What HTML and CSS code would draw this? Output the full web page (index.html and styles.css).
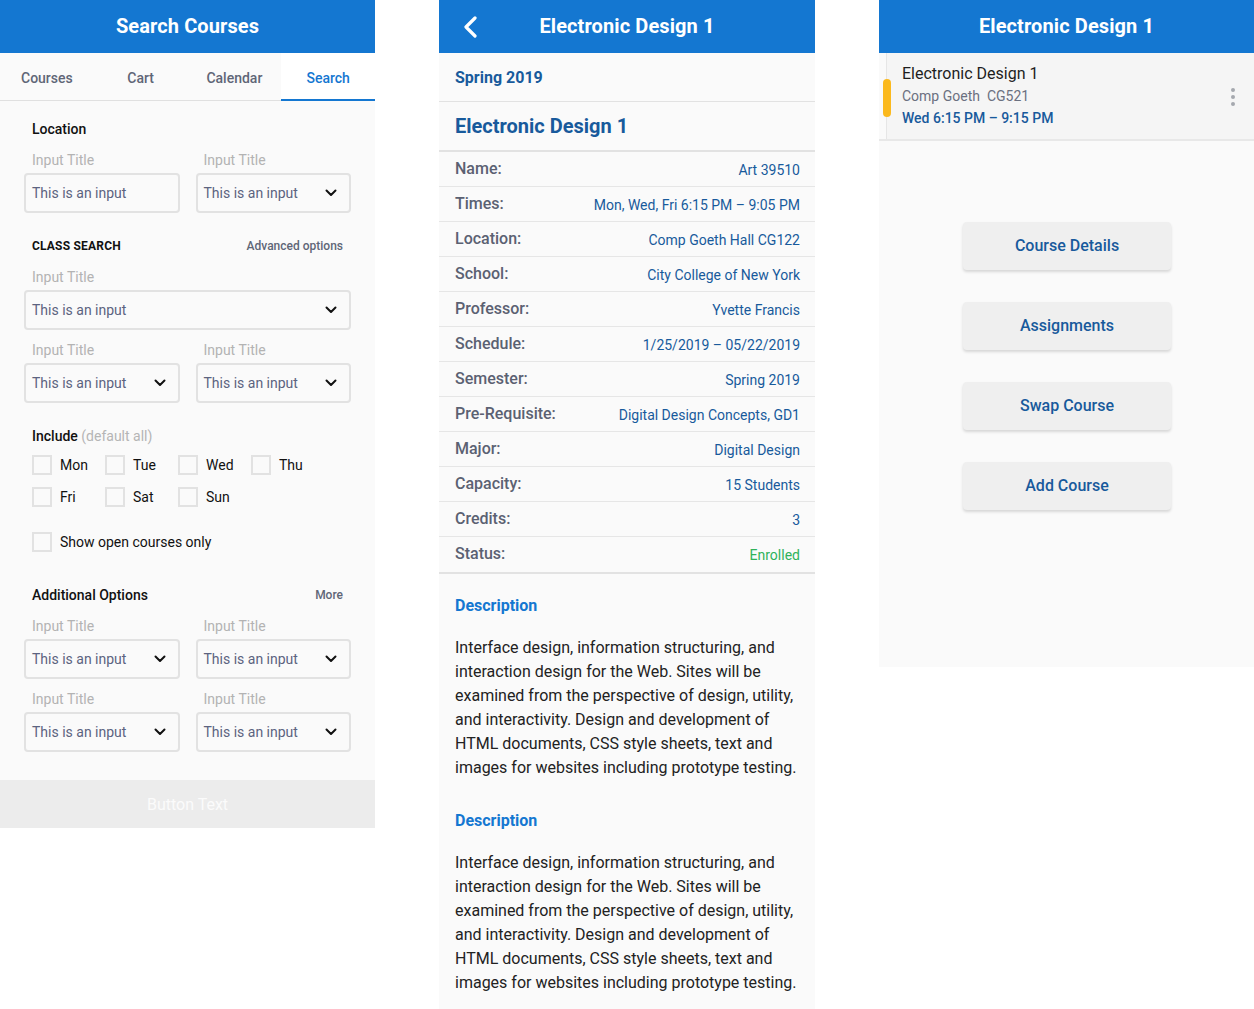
FILE: index.html
```html
<!DOCTYPE html>
<html>
<head>
<meta charset="utf-8">
<link rel="stylesheet" href="styles.css">
</head>
<body>
<div class="screens">
  <!-- Left: Search Courses -->
  <section class="panel panel-search">
    <header class="appbar"><h1>Search Courses</h1></header>
    <nav class="tabs">
      <div class="tab">Courses</div>
      <div class="tab">Cart</div>
      <div class="tab">Calendar</div>
      <div class="tab active">Search</div>
    </nav>
    <div class="form">
      <div class="sec-title first"><span class="t-med">Location</span></div>
      <div class="row2">
        <div class="field">
          <div class="flabel">Input Title</div>
          <div class="input"><span>This is an input</span></div>
        </div>
        <div class="field">
          <div class="flabel">Input Title</div>
          <div class="input"><span>This is an input</span><svg class="chev" viewBox="0 0 12 8"><path d="M1.5 1.5 L6 6 L10.5 1.5"/></svg></div>
        </div>
      </div>

      <div class="sec-title"><span class="t-caps">CLASS SEARCH</span><span class="t-link">Advanced options</span></div>
      <div class="field">
        <div class="flabel">Input Title</div>
        <div class="input"><span>This is an input</span><svg class="chev" viewBox="0 0 12 8"><path d="M1.5 1.5 L6 6 L10.5 1.5"/></svg></div>
      </div>
      <div class="row2 gap-top">
        <div class="field">
          <div class="flabel">Input Title</div>
          <div class="input"><span>This is an input</span><svg class="chev" viewBox="0 0 12 8"><path d="M1.5 1.5 L6 6 L10.5 1.5"/></svg></div>
        </div>
        <div class="field">
          <div class="flabel">Input Title</div>
          <div class="input"><span>This is an input</span><svg class="chev" viewBox="0 0 12 8"><path d="M1.5 1.5 L6 6 L10.5 1.5"/></svg></div>
        </div>
      </div>

      <div class="sec-title"><span class="t-med">Include <span class="muted">(default all)</span></span></div>
      <div class="days">
        <label class="check"><span class="box"></span>Mon</label>
        <label class="check"><span class="box"></span>Tue</label>
        <label class="check"><span class="box"></span>Wed</label>
        <label class="check"><span class="box"></span>Thu</label>
        <label class="check"><span class="box"></span>Fri</label>
        <label class="check"><span class="box"></span>Sat</label>
        <label class="check"><span class="box"></span>Sun</label>
      </div>
      <div class="open-only">
        <label class="check wide"><span class="box"></span>Show open courses only</label>
      </div>

      <div class="sec-title add"><span class="t-med">Additional Options</span><span class="t-link">More</span></div>
      <div class="row2">
        <div class="field">
          <div class="flabel">Input Title</div>
          <div class="input"><span>This is an input</span><svg class="chev" viewBox="0 0 12 8"><path d="M1.5 1.5 L6 6 L10.5 1.5"/></svg></div>
        </div>
        <div class="field">
          <div class="flabel">Input Title</div>
          <div class="input"><span>This is an input</span><svg class="chev" viewBox="0 0 12 8"><path d="M1.5 1.5 L6 6 L10.5 1.5"/></svg></div>
        </div>
      </div>
      <div class="row2 gap-top">
        <div class="field">
          <div class="flabel">Input Title</div>
          <div class="input"><span>This is an input</span><svg class="chev" viewBox="0 0 12 8"><path d="M1.5 1.5 L6 6 L10.5 1.5"/></svg></div>
        </div>
        <div class="field">
          <div class="flabel">Input Title</div>
          <div class="input"><span>This is an input</span><svg class="chev" viewBox="0 0 12 8"><path d="M1.5 1.5 L6 6 L10.5 1.5"/></svg></div>
        </div>
      </div>
    </div>
    <div class="bottom-btn">Button Text</div>
  </section>

  <!-- Middle: Course details -->
  <section class="panel panel-detail">
    <header class="appbar">
      <svg class="back" viewBox="0 0 16 22"><path d="M13 2 L4 11 L13 20"/></svg>
      <h1>Electronic Design 1</h1>
    </header>
    <div class="term">Spring 2019</div>
    <div class="course-title">Electronic Design 1</div>
    <div class="info">
      <div class="irow"><span class="ilabel">Name:</span><span class="ival">Art 39510</span></div>
      <div class="irow"><span class="ilabel">Times:</span><span class="ival">Mon, Wed, Fri 6:15 PM – 9:05 PM</span></div>
      <div class="irow"><span class="ilabel">Location:</span><span class="ival">Comp Goeth Hall CG122</span></div>
      <div class="irow"><span class="ilabel">School:</span><span class="ival">City College of New York</span></div>
      <div class="irow"><span class="ilabel">Professor:</span><span class="ival">Yvette Francis</span></div>
      <div class="irow"><span class="ilabel">Schedule:</span><span class="ival">1/25/2019 – 05/22/2019</span></div>
      <div class="irow"><span class="ilabel">Semester:</span><span class="ival">Spring 2019</span></div>
      <div class="irow"><span class="ilabel">Pre-Requisite:</span><span class="ival">Digital Design Concepts, GD1</span></div>
      <div class="irow"><span class="ilabel">Major:</span><span class="ival">Digital Design</span></div>
      <div class="irow"><span class="ilabel">Capacity:</span><span class="ival">15 Students</span></div>
      <div class="irow"><span class="ilabel">Credits:</span><span class="ival">3</span></div>
      <div class="irow last"><span class="ilabel">Status:</span><span class="ival green">Enrolled</span></div>
    </div>
    <div class="desc">
      <h2>Description</h2>
      <p>Interface design, information structuring, and<br>interaction design for the Web. Sites will be<br>examined from the perspective of design, utility,<br>and interactivity. Design and development of<br>HTML documents, CSS style sheets, text and<br>images for websites including prototype testing.</p>
      <h2 class="second">Description</h2>
      <p>Interface design, information structuring, and<br>interaction design for the Web. Sites will be<br>examined from the perspective of design, utility,<br>and interactivity. Design and development of<br>HTML documents, CSS style sheets, text and<br>images for websites including prototype testing.</p>
    </div>
  </section>

  <!-- Right: actions -->
  <section class="panel panel-actions">
    <header class="appbar"><h1>Electronic Design 1</h1></header>
    <div class="card">
      <span class="pill"></span>
      <div class="card-body">
        <div class="c-title">Electronic Design 1</div>
        <div class="c-sub">Comp Goeth&nbsp; CG521</div>
        <div class="c-time">Wed 6:15 PM – 9:15 PM</div>
      </div>
      <svg class="kebab" viewBox="0 0 6 20"><circle cx="3" cy="3" r="2"/><circle cx="3" cy="10" r="2"/><circle cx="3" cy="17" r="2"/></svg>
    </div>
    <div class="actions">
      <div class="abtn">Course Details</div>
      <div class="abtn">Assignments</div>
      <div class="abtn">Swap Course</div>
      <div class="abtn">Add Course</div>
    </div>
  </section>
</div>
</body>
</html>
```

FILE: styles.css
```css
* { box-sizing: border-box; }
html, body { margin: 0; padding: 0; }
body {
  background: #ffffff;
  font-family: Roboto, "Noto Sans", "Liberation Sans", sans-serif;
  color: #222;
}
.screens {
  display: flex;
  align-items: flex-start;
  gap: 64px;
}
.panel {
  background: #fafafa;
  display: flex;
  flex-direction: column;
}
.panel-search { width: 375px; }
.panel-detail { width: 376px; min-height: 1009px; }
.panel-actions { width: 375px; min-height: 667px; }

.appbar {
  height: 53px;
  background: #1477d1;
  display: flex;
  align-items: center;
  justify-content: center;
  position: relative;
  padding-bottom: 1px;
}
.appbar h1 {
  margin: 0;
  color: #fff;
  font-size: 20px;
  font-weight: 700;
  letter-spacing: 0.1px;
}

/* Tabs */
.tabs {
  display: flex;
  height: 48px;
  border-bottom: 1px solid #e0e0e0;
}
.tab {
  flex: 1;
  display: flex;
  align-items: center;
  justify-content: center;
  padding-top: 2px;
  font-size: 14px;
  font-weight: 500;
  color: #5f6677;
}
.tab.active {
  color: #1477d1;
  border-bottom: 2px solid #1477d1;
  margin-bottom: -1px;
  padding-top: 3px;
  background: #fff;
}

/* Form */
.form { padding: 18px 24px 0; }
.sec-title {
  display: flex;
  justify-content: space-between;
  align-items: center;
  height: 20px;
  padding: 0 8px;
  margin-top: 23px;
  margin-bottom: 11px;
}
.sec-title.first { margin-top: 0; }
.sec-title.add { margin-top: 33px; }
.t-med { font-size: 14px; font-weight: 500; color: #111; }
.t-caps { font-size: 12px; font-weight: 700; color: #111; letter-spacing: 0.2px; }
.t-link { font-size: 12px; font-weight: 500; color: #5f6677; }
.muted { color: #b5b5b5; font-weight: 400; }

.row2 { display: flex; gap: 16px; }
.row2 .field { width: 156px; }
.gap-top { margin-top: 10px; }
.field .flabel {
  height: 20px;
  line-height: 20px;
  padding-left: 8px;
  font-size: 14px;
  color: #b3b3b3;
  margin-bottom: 3px;
}
.input {
  height: 40px;
  border: 2px solid #e2e2e2;
  border-radius: 4px;
  display: flex;
  align-items: center;
  justify-content: space-between;
  padding: 0 12px 0 6px;
  font-size: 14px;
  color: #5c6380;
  background: #fafafa;
}
.chev {
  width: 12px;
  height: 8px;
  fill: none;
  stroke: #111;
  stroke-width: 2;
  stroke-linecap: round;
  stroke-linejoin: round;
}

.days {
  display: flex;
  flex-wrap: wrap;
  row-gap: 12px;
  padding-left: 8px;
  margin-top: -2px;
}
.check {
  width: 73px;
  height: 20px;
  display: flex;
  align-items: center;
  gap: 8px;
  font-size: 14px;
  color: #111;
}
.check.wide { width: auto; }
.box {
  width: 20px;
  height: 20px;
  border: 2px solid #e2e2e2;
  background: #fafafa;
  flex: none;
}
.open-only { padding-left: 8px; margin-top: 25px; }

.bottom-btn {
  margin-top: 28px;
  height: 48px;
  background: #ececec;
  color: #fbfbfb;
  font-size: 16px;
  display: flex;
  align-items: center;
  justify-content: center;
}

/* Detail */
.back {
  position: absolute;
  left: 23px;
  top: 16px;
  width: 16px;
  height: 22px;
  fill: none;
  stroke: #fff;
  stroke-width: 3.2;
  stroke-linecap: round;
  stroke-linejoin: round;
}
.term {
  height: 49px;
  display: flex;
  align-items: center;
  padding: 0 16px;
  font-size: 16px;
  font-weight: 700;
  color: #185a9c;
  border-bottom: 1px solid #e2e2e2;
  background: #fafafa;
}
.course-title {
  height: 50px;
  display: flex;
  align-items: center;
  padding: 0 16px;
  font-size: 20px;
  font-weight: 700;
  color: #185a9c;
  border-bottom: 2px solid #e2e2e2;
}
.irow {
  height: 35px;
  display: flex;
  align-items: center;
  justify-content: space-between;
  padding: 0 15px 0 16px;
  border-bottom: 1px solid #e6e6e6;
}
.irow.last { border-bottom: 2px solid #e2e2e2; height: 37px; }
.ilabel {
  font-size: 16px;
  font-weight: 500;
  color: #5b6172;
  margin-top: -2px;
}
.ival {
  font-size: 14px;
  color: #185a9c;
  margin-top: 1px;
}
.ival.green { color: #2fb25a; }

.desc { padding: 20px 16px 15px; }
.desc h2 {
  margin: 0;
  font-size: 16px;
  font-weight: 700;
  color: #1477d1;
  line-height: 24px;
}
.desc h2.second { margin-top: 29px; }
.desc p {
  margin: 18px 0 0;
  font-size: 16px;
  line-height: 24px;
  color: #222;
  white-space: nowrap;
}

/* Actions */
.card {
  position: relative;
  height: 88px;
  display: flex;
  align-items: stretch;
  border-bottom: 2px solid #e8e8e8;
  background: #f5f5f5;
  padding-left: 7px;
  box-shadow: inset 7px 0 0 #fafafa;
}
.pill {
  position: absolute;
  left: 4px;
  top: 26px;
  width: 8px;
  height: 38px;
  border-radius: 4px;
  background: #fbb91d;
}
.card-body {
  flex: 1;
  border-left: 1px solid #e6e6e6;
  padding: 10px 0 0 15px;
}
.c-title { font-size: 16px; line-height: 22px; color: #1e1e1e; }
.c-sub { font-size: 14px; line-height: 22px; color: #6b7080; margin-top: 0; }
.c-time { font-size: 14px; line-height: 22px; font-weight: 500; color: #185a9c; }
.kebab {
  position: absolute;
  right: 18px;
  top: 34px;
  width: 6px;
  height: 20px;
  fill: #a5a8ae;
}
.actions {
  display: flex;
  flex-direction: column;
  align-items: center;
  gap: 32px;
  padding-top: 81px;
}
.abtn {
  width: 208px;
  height: 48px;
  margin-left: 1px;
  background: #efefef;
  border-radius: 4px;
  box-shadow: 0 2px 3px rgba(0,0,0,0.14);
  display: flex;
  align-items: center;
  justify-content: center;
  padding-bottom: 1px;
  font-size: 16px;
  font-weight: 500;
  color: #185a9c;
}
```
